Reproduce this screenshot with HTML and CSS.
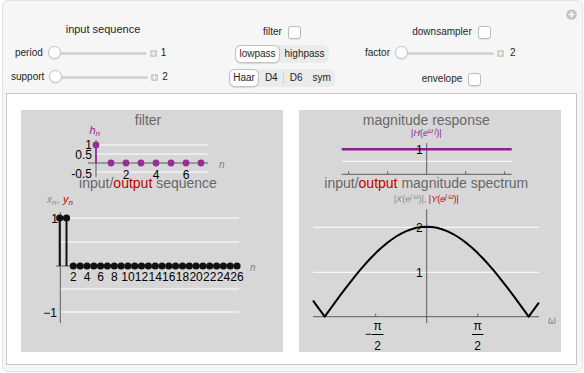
FILE: index.html
```html
<!DOCTYPE html>
<html lang="en">
<head>
    <meta charset="UTF-8">
    <meta name="viewport" content="width=device-width, initial-scale=1.0">
    <title>Filter and Downsampler</title>
    <link rel="stylesheet" href="styles.css">
</head>
<body>
    <div class="frame">
        <!-- top right add button -->
        <svg class="add-icon" width="11" height="11" viewBox="0 0 11 11">
            <circle cx="5.5" cy="5.5" r="5.3" fill="#c4c4c4"/>
            <path d="M5.5 2.6v5.8M2.6 5.5h5.8" stroke="#fff" stroke-width="1.5"/>
        </svg>

        <!-- Controls -->
        <div class="controls">
            <div class="col col-input">
                <div class="group-title">input sequence</div>
                <div class="slider-row row-period">
                    <span class="label">period</span>
                    <div class="slider"><span class="knob"></span></div>
                    <svg class="plus" width="7" height="7" viewBox="0 0 7 7"><rect width="7" height="7" rx="1" fill="#cdcdcd"/><path d="M3.5 1.3v4.4M1.3 3.5h4.4" stroke="#fff" stroke-width="1.2"/></svg>
                    <span class="value">1</span>
                </div>
                <div class="slider-row row-support">
                    <span class="label">support</span>
                    <div class="slider"><span class="knob"></span></div>
                    <svg class="plus" width="7" height="7" viewBox="0 0 7 7"><rect width="7" height="7" rx="1" fill="#cdcdcd"/><path d="M3.5 1.3v4.4M1.3 3.5h4.4" stroke="#fff" stroke-width="1.2"/></svg>
                    <span class="value">2</span>
                </div>
            </div>

            <div class="col col-filter">
                <div class="check-row">
                    <span class="label">filter</span>
                    <span class="checkbox"></span>
                </div>
                <div class="segmented">
                    <span class="seg selected">lowpass</span>
                    <span class="seg">highpass</span>
                </div>
                <div class="segmented">
                    <span class="seg selected">Haar</span>
                    <span class="seg seg-wide">D4</span>
                    <span class="seg-sep"></span>
                    <span class="seg seg-wide">D6</span>
                    <span class="seg">sym</span>
                </div>
            </div>

            <div class="col col-down">
                <div class="check-row">
                    <span class="label">downsampler</span>
                    <span class="checkbox"></span>
                </div>
                <div class="slider-row row-factor">
                    <span class="label">factor</span>
                    <div class="slider"><span class="knob"></span></div>
                    <svg class="plus" width="7" height="7" viewBox="0 0 7 7"><rect width="7" height="7" rx="1" fill="#cdcdcd"/><path d="M3.5 1.3v4.4M1.3 3.5h4.4" stroke="#fff" stroke-width="1.2"/></svg>
                    <span class="value value-far">2</span>
                </div>
                <div class="check-row row-envelope">
                    <span class="label">envelope</span>
                    <span class="checkbox"></span>
                </div>
            </div>
        </div>

        <!-- Plots -->
        <div class="panel">
            <div class="plot">
                <svg width="262" height="242" viewBox="0 0 262 242">
                    <!-- filter h_n -->
                    <g class="grid">
                        <line x1="75" y1="35" x2="187" y2="35"/>
                        <line x1="75" y1="44" x2="187" y2="44"/>
                        <line x1="75" y1="62" x2="187" y2="62"/>
                    </g>
                    <line class="axis" x1="67" y1="53" x2="187" y2="53"/>
                    <line class="axis" x1="75" y1="30" x2="75" y2="67"/>
                    <line class="stem-purple" x1="75" y1="53" x2="75" y2="35"/>
                    <g class="dot-purple">
                        <circle cx="75" cy="35" r="3.4"/>
                        <circle cx="90" cy="53" r="3.4"/>
                        <circle cx="105" cy="53" r="3.4"/>
                        <circle cx="120" cy="53" r="3.4"/>
                        <circle cx="135" cy="53" r="3.4"/>
                        <circle cx="150" cy="53" r="3.4"/>
                        <circle cx="165" cy="53" r="3.4"/>
                        <circle cx="180" cy="53" r="3.4"/>
                    </g>
                    <g class="tick end">
                        <text x="71" y="39">1</text>
                        <text x="71" y="49">0.5</text>
                        <text x="71" y="68">-0.5</text>
                    </g>
                    <g class="tick mid">
                        <text x="105" y="68.5">2</text>
                        <text x="135" y="68.5">4</text>
                        <text x="165" y="68.5">6</text>
                    </g>
                    <text class="var" x="198" y="58">n</text>
                    <text class="title" x="127" y="14.5">filter</text>
                    <text class="lab-purple" x="68.5" y="23.5">h</text>
                    <text class="lab-purple small" x="74.5" y="26">n</text>

                    <!-- input/output sequence -->
                    <g class="grid">
                        <line x1="39" y1="108" x2="218" y2="108"/>
                        <line x1="39" y1="132" x2="218" y2="132"/>
                        <line x1="39" y1="179" x2="218" y2="179"/>
                        <line x1="39" y1="202" x2="218" y2="202"/>
                    </g>
                    <line class="axis" x1="35" y1="156" x2="218" y2="156"/>
                    <line class="axis" x1="39.3" y1="102" x2="39.3" y2="213"/>
                    <line class="stem-black" x1="38.7" y1="156" x2="38.7" y2="108"/>
                    <line class="stem-black" x1="45.5" y1="156" x2="45.5" y2="108"/>
                    <g class="dot-black">
                        <circle cx="38.7" cy="108" r="3.6"/>
                        <circle cx="45.5" cy="108" r="3.6"/>
                        <circle cx="52.3" cy="156" r="3.6"/>
                        <circle cx="59.2" cy="156" r="3.6"/>
                        <circle cx="66.0" cy="156" r="3.6"/>
                        <circle cx="72.8" cy="156" r="3.6"/>
                        <circle cx="79.6" cy="156" r="3.6"/>
                        <circle cx="86.4" cy="156" r="3.6"/>
                        <circle cx="93.3" cy="156" r="3.6"/>
                        <circle cx="100.1" cy="156" r="3.6"/>
                        <circle cx="106.9" cy="156" r="3.6"/>
                        <circle cx="113.7" cy="156" r="3.6"/>
                        <circle cx="120.5" cy="156" r="3.6"/>
                        <circle cx="127.4" cy="156" r="3.6"/>
                        <circle cx="134.2" cy="156" r="3.6"/>
                        <circle cx="141.0" cy="156" r="3.6"/>
                        <circle cx="147.8" cy="156" r="3.6"/>
                        <circle cx="154.6" cy="156" r="3.6"/>
                        <circle cx="161.5" cy="156" r="3.6"/>
                        <circle cx="168.3" cy="156" r="3.6"/>
                        <circle cx="175.1" cy="156" r="3.6"/>
                        <circle cx="181.9" cy="156" r="3.6"/>
                        <circle cx="188.7" cy="156" r="3.6"/>
                        <circle cx="195.6" cy="156" r="3.6"/>
                        <circle cx="202.4" cy="156" r="3.6"/>
                        <circle cx="209.2" cy="156" r="3.6"/>
                        <circle cx="216.0" cy="156" r="3.6"/>
                    </g>
                    <g class="tick end">
                        <text x="37" y="112.5">1</text>
                        <text x="36" y="206.5">−1</text>
                    </g>
                    <g class="tick mid">
                        <text x="52.3" y="171">2</text>
                        <text x="66.0" y="171">4</text>
                        <text x="79.6" y="171">6</text>
                        <text x="93.3" y="171">8</text>
                        <text x="106.9" y="171">10</text>
                        <text x="120.5" y="171">12</text>
                        <text x="134.2" y="171">14</text>
                        <text x="147.8" y="171">16</text>
                        <text x="161.5" y="171">18</text>
                        <text x="175.1" y="171">20</text>
                        <text x="188.7" y="171">22</text>
                        <text x="202.4" y="171">24</text>
                        <text x="216.0" y="171">26</text>
                    </g>
                    <text class="var" x="229" y="161">n</text>
                    <text class="title" x="127" y="78">input/<tspan class="red">output</tspan> sequence</text>
                    <text class="lab-gray" x="26" y="93">x</text>
                    <text class="lab-gray small" x="31" y="95">n</text>
                    <text class="lab-gray" x="36" y="93">,</text>
                    <text class="lab-red" x="42" y="93">y</text>
                    <text class="lab-red small" x="47.5" y="95">n</text>
                </svg>
            </div>

            <div class="plot">
                <svg width="262" height="242" viewBox="0 0 262 242">
                    <!-- magnitude response -->
                    <line class="grid-line" x1="42.7" y1="51.3" x2="212.7" y2="51.3"/>
                    <line class="axis" x1="42.7" y1="64.3" x2="212.7" y2="64.3"/>
                    <path class="axis" d="M49.7 64.3v-3M88.7 64.3v-3M166.7 64.3v-3M205.7 64.3v-3"/>
                    <line class="axis" x1="127.7" y1="33" x2="127.7" y2="65"/>
                    <line class="line-purple" x1="42.7" y1="39.3" x2="212.7" y2="39.3"/>
                    <text class="tick end" x="123.7" y="43.5">1</text>
                    <text class="title" x="127.3" y="14.5">magnitude response</text>
                    <text class="sub-lab purple" x="127.3" y="26">|<tspan class="it">H</tspan>(<tspan class="it">e</tspan><tspan class="sup it" dy="-3.5">ω j</tspan><tspan dy="3.5">)|</tspan></text>

                    <!-- input/output magnitude spectrum -->
                    <g class="grid">
                        <line x1="14" y1="117.3" x2="240" y2="117.3"/>
                        <line x1="14" y1="162.3" x2="240" y2="162.3"/>
                    </g>
                    <line class="axis" x1="14" y1="206.7" x2="240" y2="206.7"/>
                    <path class="axis" d="M76.7 206.7v-3M178.7 206.7v-3"/>
                    <line class="axis" x1="127.7" y1="99.3" x2="127.7" y2="213.3"/>
                    <path class="curve" d="M14 190.5L15.5 192.6L20.6 199.6L25.7 206.7L30.8 199.6L35.9 192.6L41 185.7L46.1 178.9L51.2 172.3L56.3 165.8L61.4 159.7L66.5 153.8L71.6 148.3L76.7 143.1L81.8 138.3L86.9 133.9L92 130L97.1 126.5L102.2 123.6L107.3 121.1L112.4 119.2L117.5 117.8L122.6 117L127.7 116.7L132.8 117L137.9 117.8L143 119.2L148.1 121.1L153.2 123.6L158.3 126.5L163.4 130L168.5 133.9L173.6 138.3L178.7 143.1L183.8 148.3L188.9 153.8L194 159.7L199.1 165.8L204.2 172.3L209.3 178.9L214.4 185.7L219.5 192.6L224.6 199.6L229.7 206.7L234.8 199.6L239.9 192.6"/>
                    <g class="tick end">
                        <text x="123.7" y="121.5">2</text>
                        <text x="123.7" y="166.5">1</text>
                    </g>
                    <g class="tick mid">
                        <text x="69.3" y="228">−</text>
                        <text x="78.7" y="219.5">π</text>
                        <text x="78.7" y="239.5">2</text>
                        <text x="178.7" y="219.5">π</text>
                        <text x="178.7" y="239.5">2</text>
                    </g>
                    <path class="frac" d="M73 224.5h11.5M173 224.5h11.5"/>
                    <text class="var" x="249" y="213.5">ω</text>
                    <text class="title" x="127.3" y="78">input/<tspan class="red">output</tspan> magnitude spectrum</text>
                    <text class="sub-lab" x="127.3" y="92"><tspan class="gray">|<tspan class="it">X</tspan>(<tspan class="it">e</tspan><tspan class="sup it" dy="-3.5">j ω</tspan><tspan dy="3.5">)|, </tspan></tspan><tspan class="red">|<tspan class="it">Y</tspan>(<tspan class="it">e</tspan><tspan class="sup it" dy="-3.5">j ω</tspan><tspan dy="3.5">)|</tspan></tspan></text>
                </svg>
            </div>
        </div>
    </div>
</body>
</html>
```

FILE: styles.css
```css
* {
    box-sizing: border-box;
}

body {
    margin: 0;
    background-color: #fff;
    font-family: "Liberation Sans", Arial, sans-serif;
    color: #1e1e1e;
}

/* Outer frame */
.frame {
    position: relative;
    margin-left: 2px;
    width: 581px;
    height: 372px;
    background-color: #f6f6f6;
    border: 1px solid #e3e3e3;
    border-radius: 6px;
    display: flex;
    flex-direction: column;
}

.add-icon {
    position: absolute;
    top: 8px;
    right: 5px;
}

/* Controls */
.controls {
    height: 92px;
    display: flex;
    font-size: 10px;
}

.col {
    display: flex;
    flex-direction: column;
    align-items: center;
}

.col-input {
    width: 200px;
    padding-top: 21px;
    gap: 10px;
}

.col-filter {
    width: 158px;
    padding-top: 24px;
    gap: 6px;
}

.col-down {
    width: 221px;
    padding-top: 24px;
    padding-right: 40px;
}

.group-title {
    font-size: 11px;
    line-height: 14px;
}

.label {
    line-height: 14px;
}

.slider-row {
    align-self: flex-start;
    display: flex;
    align-items: center;
    height: 14px;
}

.row-period {
    margin-left: 12px;
}

.row-support {
    margin-left: 8px;
}

.row-factor {
    margin-left: 4px;
    margin-top: 7px;
}

.slider {
    position: relative;
    width: 99px;
    height: 14px;
    margin-left: 5px;
}

.slider::before {
    content: "";
    position: absolute;
    left: 2px;
    right: 0;
    top: 6px;
    height: 3px;
    border-radius: 2px;
    background-color: #d5d5d5;
}

.knob {
    position: absolute;
    left: 0;
    top: 0;
    width: 13px;
    height: 13px;
    border-radius: 50%;
    background-color: #fff;
    border: 1px solid #c6c6c6;
    box-shadow: 0 0.5px 1px rgba(0, 0, 0, 0.15);
}

.plus {
    margin-left: 3px;
}

.value {
    margin-left: 4px;
    line-height: 14px;
}

.value-far {
    margin-left: 6px;
}

.check-row {
    display: flex;
    align-items: center;
    gap: 6px;
    height: 14px;
}

.row-envelope {
    margin-top: 12px;
}

.checkbox {
    width: 13px;
    height: 13px;
    border: 1px solid #bcbcbc;
    border-radius: 3px;
    background-color: #fff;
    box-shadow: 0 0.5px 1px rgba(0, 0, 0, 0.08);
}

/* Segmented buttons */
.segmented {
    display: flex;
    align-items: center;
    height: 18px;
    background-color: #ebebeb;
    border-radius: 6px;
}

.seg {
    height: 18px;
    line-height: 16px;
    padding: 0 3.5px;
    border: 1px solid transparent;
    border-radius: 6px;
}

.seg-wide {
    padding: 0 4.5px;
}

.seg.selected {
    background-color: #fff;
    border-color: #c4c4c4;
    box-shadow: 0 0.5px 1px rgba(0, 0, 0, 0.12);
}

.seg-sep {
    width: 1px;
    height: 11px;
    background-color: #cfcfcf;
}

/* Plot panel */
.panel {
    margin: 0 5px 0 3px;
    height: 272px;
    background-color: #fff;
    border: 1px solid #c8c8c8;
    padding: 16px 15px 12px 14px;
    display: flex;
    gap: 16px;
}

.plot {
    width: 262px;
    height: 242px;
    background-color: #d7d7d7;
}

.plot svg {
    display: block;
    font-family: "Liberation Sans", Arial, sans-serif;
}

.grid line,
.grid-line {
    stroke: #fff;
    stroke-width: 1;
}

.axis {
    stroke: #5e5e5e;
    stroke-width: 1;
    fill: none;
}

.stem-purple {
    stroke: #8e268e;
    stroke-width: 1.6;
}

.dot-purple circle {
    fill: #952e95;
}

.stem-black {
    stroke: #111;
    stroke-width: 2;
}

.dot-black circle {
    fill: #111;
}

.line-purple {
    stroke: #8b1f8b;
    stroke-width: 2.5;
}

.curve {
    fill: none;
    stroke: #000;
    stroke-width: 2;
    stroke-linejoin: round;
}

.frac {
    stroke: #000;
    stroke-width: 1;
}

.tick text,
text.tick {
    font-size: 12px;
    fill: #000;
}

.end text,
text.end {
    text-anchor: end;
}

.mid text {
    text-anchor: middle;
}

.title {
    font-size: 14px;
    fill: #676767;
    text-anchor: middle;
}

.red {
    fill: #c00000;
}

.gray {
    fill: #8a8a8a;
}

.var {
    font-size: 10px;
    font-style: italic;
    fill: #808080;
}

.lab-purple {
    font-size: 11px;
    font-style: italic;
    fill: #8e268e;
}

.lab-gray {
    font-size: 10px;
    font-style: italic;
    fill: #8a8a8a;
}

.lab-red {
    font-size: 11px;
    font-style: italic;
    fill: #c00000;
}

.small {
    font-size: 8px;
}

.sub-lab {
    font-size: 9px;
    text-anchor: middle;
}

.sub-lab.purple {
    fill: #8e268e;
}

.it {
    font-style: italic;
}

.sup {
    font-size: 6.5px;
}
```
